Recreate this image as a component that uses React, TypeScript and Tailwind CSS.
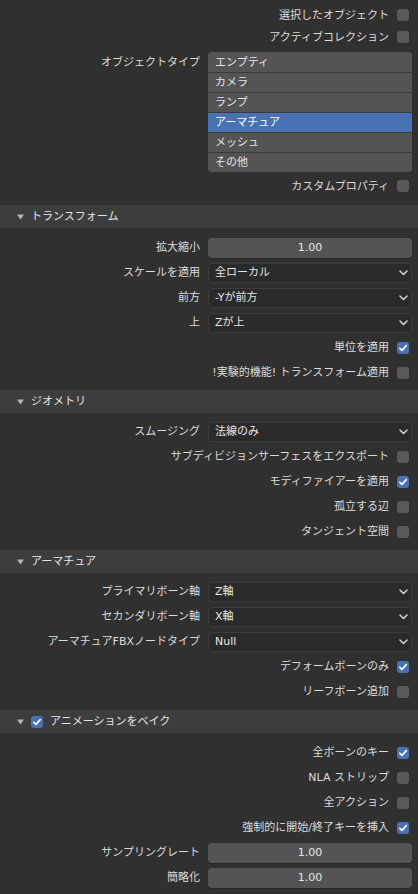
import React, { FunctionComponent, ReactNode } from "react";

const FONT = "font-['DejaVu_Sans','Noto_Sans_CJK_JP',sans-serif]";

const CheckBox: FunctionComponent<{ checked?: boolean }> = ({ checked }) => (
  <div
    className={`w-[12px] h-[12px] rounded-[3px] flex items-center justify-center shrink-0 ${
      checked ? "bg-[#4772b3]" : "bg-[#595959]"
    }`}
  >
    {checked && (
      <svg width="10" height="10" viewBox="0 0 10 10">
        <path
          d="M1.8 5.2 L4 7.4 L8.3 2.6"
          fill="none"
          stroke="#ffffff"
          strokeWidth="1.6"
          strokeLinecap="round"
          strokeLinejoin="round"
        />
      </svg>
    )}
  </div>
);

const CheckRow: FunctionComponent<{ label: string; checked?: boolean; h?: string }> = ({
  label,
  checked,
  h = "h-[25px]",
}) => (
  <div className={`${h} flex items-center justify-end gap-[8px] pr-[9px]`}>
    <span className="text-[#dcdcdc] whitespace-nowrap">{label}</span>
    <CheckBox checked={checked} />
  </div>
);

const FieldRow: FunctionComponent<{ label: string; children: ReactNode }> = ({ label, children }) => (
  <div className="h-[25px] flex items-center">
    <div className="w-[200px] text-right text-[#dcdcdc] whitespace-nowrap pr-0">{label}</div>
    <div className="ml-[8px] w-[204px]">{children}</div>
  </div>
);

const NumberField: FunctionComponent<{ value: string }> = ({ value }) => (
  <div className="h-[20px] rounded-[4px] bg-[#545454] shadow-[0_1px_0_#262626] flex items-center justify-center text-[#e6e6e6]">
    {value}
  </div>
);

const Dropdown: FunctionComponent<{ value: string }> = ({ value }) => (
  <div className="h-[20px] rounded-[4px] bg-[#2a2a2a] border border-[#3c3c3c] flex items-center pl-[6px] pr-[3px] text-[#e6e6e6]">
    <span className="flex-1">{value}</span>
    <svg width="9" height="6" viewBox="0 0 9 6">
      <path
        d="M1 1 L4.5 4.5 L8 1"
        fill="none"
        stroke="#cfcfcf"
        strokeWidth="1.6"
        strokeLinecap="round"
        strokeLinejoin="round"
      />
    </svg>
  </div>
);

const Header: FunctionComponent<{ title: string; checkbox?: boolean }> = ({ title, checkbox }) => (
  <div className="h-[23px] bg-[#3d3d3d] flex items-center pl-[17px] text-[#e6e6e6]">
    <svg width="7" height="6" viewBox="0 0 7 6" className="mr-[7px]">
      <path d="M0 0.5 L7 0.5 L3.5 5.5 Z" fill="#b4b4b4" />
    </svg>
    {checkbox && (
      <div className="mr-[7px]">
        <CheckBox checked />
      </div>
    )}
    <span>{title}</span>
  </div>
);

const objectTypes = ["エンプティ", "カメラ", "ランプ", "アーマチュア", "メッシュ", "その他"];

const App: FunctionComponent = () => {
  return (
    <div className={`w-[418px] h-[894px] bg-[#303030] text-[11px] leading-none ${FONT} overflow-hidden`}>
      <div className="pt-[4px]">
        <CheckRow label="選択したオブジェクト" h="h-[22px]" />
        <CheckRow label="アクティブコレクション" h="h-[22px]" />
      </div>

      <div className="mt-[4px] flex">
        <div className="w-[200px] h-[20px] flex items-center justify-end text-[#dcdcdc]">
          オブジェクトタイプ
        </div>
        <div className="ml-[8px] w-[204px] rounded-[4px] overflow-hidden bg-[#3a3a3a]">
          {objectTypes.map((t, index) => (
            <div
              key={index}
              className={`h-[20px] flex items-center pl-[7px] text-[#e6e6e6] ${
                index > 0 ? "border-t border-[#3a3a3a]" : ""
              } ${t === "アーマチュア" ? "bg-[#4772b3] text-white" : "bg-[#545454]"}`}
            >
              {t}
            </div>
          ))}
        </div>
      </div>

      <div className="mt-[3px]">
        <CheckRow label="カスタムプロパティ" h="h-[22px]" />
      </div>

      <div className="mt-[8px]">
        <Header title="トランスフォーム" />
        <div className="pt-[7px] pb-[5px]">
          <FieldRow label="拡大縮小">
            <NumberField value="1.00" />
          </FieldRow>
          <FieldRow label="スケールを適用">
            <Dropdown value="全ローカル" />
          </FieldRow>
          <FieldRow label="前方">
            <Dropdown value="-Yが前方" />
          </FieldRow>
          <FieldRow label="上">
            <Dropdown value="Zが上" />
          </FieldRow>
          <CheckRow label="単位を適用" checked />
          <CheckRow label="!実験的機能! トランスフォーム適用" />
        </div>
      </div>

      <Header title="ジオメトリ" />
      <div className="pt-[6px] pb-[6px]">
        <FieldRow label="スムージング">
          <Dropdown value="法線のみ" />
        </FieldRow>
        <CheckRow label="サブディビジョンサーフェスをエクスポート" />
        <CheckRow label="モディファイアーを適用" checked />
        <CheckRow label="孤立する辺" />
        <CheckRow label="タンジェント空間" />
      </div>

      <Header title="アーマチュア" />
      <div className="pt-[6px] pb-[6px]">
        <FieldRow label="プライマリボーン軸">
          <Dropdown value="Z軸" />
        </FieldRow>
        <FieldRow label="セカンダリボーン軸">
          <Dropdown value="X軸" />
        </FieldRow>
        <FieldRow label="アーマチュアFBXノードタイプ">
          <Dropdown value="Null" />
        </FieldRow>
        <CheckRow label="デフォームボーンのみ" checked />
        <CheckRow label="リーフボーン追加" />
      </div>

      <Header title="アニメーションをベイク" checkbox />
      <div className="pt-[7px]">
        <CheckRow label="全ボーンのキー" checked />
        <CheckRow label="NLA ストリップ" />
        <CheckRow label="全アクション" />
        <CheckRow label="強制的に開始/終了キーを挿入" checked />
        <FieldRow label="サンプリングレート">
          <NumberField value="1.00" />
        </FieldRow>
        <FieldRow label="簡略化">
          <NumberField value="1.00" />
        </FieldRow>
      </div>
    </div>
  );
};

export default App;
